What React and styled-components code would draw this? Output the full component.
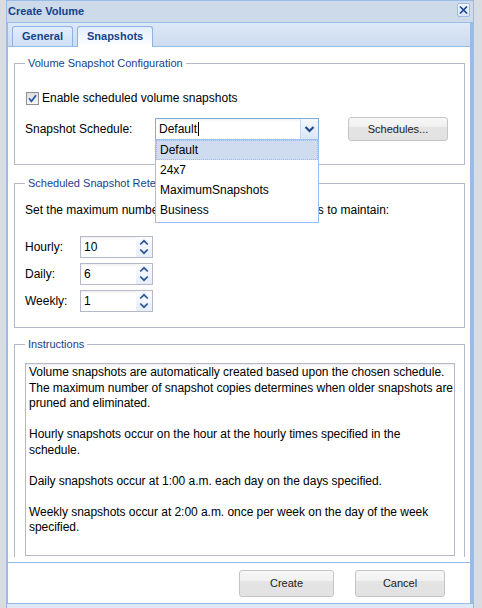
import React from 'react';
import styled, { createGlobalStyle } from 'styled-components';

const GlobalStyle = createGlobalStyle`
  html, body {
    margin: 0;
    padding: 0;
  }
  body {
    background: #d9dce1;
    font-family: "Liberation Sans", Arial, sans-serif;
    font-size: 12px;
    color: #000;
    overflow: hidden;
  }
`;

const Window = styled.div`
  box-sizing: border-box;
  width: 468px;
  height: 608px;
  margin-left: 6px;
  padding-bottom: 4px;
  border: 1px solid #99bbe8;
  border-bottom: none;
  background: #dfe8f6;
  display: flex;
  flex-direction: column;
`;

const TitleBar = styled.div`
  height: 21px;
  flex: none;
  display: flex;
  align-items: flex-start;
  padding: 0 3px 0 1px;
  background: #cddae9;
`;

const Title = styled.div`
  font-size: 11px;
  font-weight: bold;
  line-height: 20px;
  color: #15428b;
`;

const CloseButton = styled.div`
  margin: 2px 0 0 auto;
  width: 13px;
  height: 14px;
  box-sizing: border-box;
  border: 1px solid #9dbbe3;
  border-radius: 2px;
  background: linear-gradient(#f3f7fd, #d6e4f6);
  display: flex;
  align-items: center;
  justify-content: center;
`;

const Panel = styled.div`
  flex: 1;
  display: flex;
  flex-direction: column;
  border: 1px solid #99bbe8;
  border-right-width: 3px;
  background: #fff;
  min-height: 0;
`;

const TabStrip = styled.div`
  height: 23px;
  flex: none;
  display: flex;
  align-items: flex-end;
  gap: 4px;
  padding-left: 4px;
  border-bottom: 1px solid #99bbe8;
  background: linear-gradient(#dde8f6, #cddcf0);
`;

const Tab = styled.div`
  position: relative;
  box-sizing: border-box;
  height: ${p => (p.$active ? 21 : 20)}px;
  margin-bottom: ${p => (p.$active ? -1 : 0)}px;
  padding: 0 9px;
  border: 1px solid #8db2e3;
  border-bottom: none;
  border-radius: 3px 3px 0 0;
  background: ${p =>
    p.$active
      ? 'linear-gradient(#e2edfc, #f7faff 70%, #fff)'
      : 'linear-gradient(#e3edfb, #cfdff5)'};
  font-size: 11px;
  font-weight: bold;
  line-height: 19px;
  color: #15428b;
`;

const TabBody = styled.div`
  height: 515px;
  flex: none;
  background: #fff;
`;

const Scroll = styled.div`
  height: 510px;
  overflow: hidden;
  padding: 0 5px 0 6px;
`;

const Fieldset = styled.fieldset`
  margin: ${p => p.$mt}px 0 0;
  padding: ${p => p.$pt}px 9px ${p => p.$pb}px 10px;
  border: 1px solid #b5b8c8;
  min-width: 0;
`;

const Legend = styled.legend`
  padding: 0 3px;
  font-size: 11px;
  line-height: 14px;
  color: #15428b;
`;

const CheckRow = styled.label`
  display: flex;
  align-items: center;
  gap: 3px;
  height: 16px;
  padding-left: 1px;
`;

const FormRow = styled.div`
  display: flex;
  align-items: center;
  height: ${p => p.$h}px;
  margin-top: ${p => p.$mt}px;
`;

const FieldLabel = styled.div`
  width: ${p => p.$w}px;
  flex: none;
`;

const TextLine = styled.div`
  height: 16px;
  line-height: 16px;
  white-space: nowrap;
`;

const Combo = styled.div`
  position: relative;
  display: flex;
  width: 164px;
  height: 22px;
  box-sizing: border-box;
  border: 1px solid #7eadd9;
  background: #fff;
`;

const ComboText = styled.div`
  flex: 1;
  display: flex;
  align-items: center;
  padding-left: 3px;
  background: linear-gradient(#efefef, #fff 3px);
`;

const Caret = styled.span`
  width: 1px;
  height: 14px;
  background: #000;
  margin-left: 1px;
`;

const Trigger = styled.div`
  width: 17px;
  flex: none;
  display: flex;
  align-items: center;
  justify-content: center;
  border-left: 1px solid #c7d8ee;
  background: linear-gradient(#f4f8fe, #d9e6f7);
`;

const DropList = styled.div`
  position: absolute;
  top: 100%;
  left: -1px;
  width: 164px;
  box-sizing: border-box;
  padding-bottom: 2px;
  border: 1px solid #98c0f4;
  background: #fff;
  z-index: 5;
`;

const DropItem = styled.div`
  height: 20px;
  box-sizing: border-box;
  padding: 0 3px;
  line-height: 18px;
  border: 1px ${p => (p.$selected ? 'dotted #a3bae9' : 'solid transparent')};
  background: ${p => (p.$selected ? '#cfdcf0' : 'transparent')};
`;

const Button = styled.div`
  width: ${p => p.$w}px;
  height: ${p => p.$h}px;
  margin-left: ${p => p.$ml || 0}px;
  flex: none;
  box-sizing: border-box;
  border: 1px solid #c5c5c5;
  border-radius: 3px;
  background: linear-gradient(#f7f7f7, #f1f1f1 38%, #e4e4e4 42%, #e2e2e2);
  display: flex;
  align-items: center;
  justify-content: center;
  font-size: 11px;
  color: #222;
`;

const SpinGroup = styled.div`
  display: flex;
  flex-direction: column;
  gap: 5px;
  margin-top: 18px;
`;

const Spinner = styled.div`
  display: flex;
  width: 73px;
  height: 22px;
  box-sizing: border-box;
  border: 1px solid #b5b8c8;
  background: #fff;
`;

const SpinValue = styled.div`
  flex: 1;
  padding-left: 3px;
  line-height: 20px;
  background: linear-gradient(#efefef, #fff 3px);
`;

const SpinTrigger = styled.div`
  width: 16px;
  flex: none;
  display: flex;
  align-items: center;
  justify-content: center;
  background: linear-gradient(#fbfcfe, #e6eef9);
`;

const InfoBox = styled.div`
  height: 193px;
  box-sizing: border-box;
  margin-top: 12px;
  padding: 1px 3px;
  border: 1px solid #b5b8c8;
  background: linear-gradient(#ececec, #fff 3px);
  line-height: 15.5px;
  letter-spacing: -0.04px;
  white-space: pre;
  overflow: hidden;
`;

const Footer = styled.div`
  height: 40px;
  flex: none;
  display: flex;
  align-items: center;
  justify-content: flex-end;
  gap: 21px;
  padding-right: 25px;
  border-top: 1px solid #99bbe8;
  background: #fff;
`;

const CloseIcon = () => (
  <svg width="9" height="10" viewBox="0 0 9 10">
    <path d="M1 1.5 L8 8.5 M8 1.5 L1 8.5" stroke="#15428b" strokeWidth="1.6" fill="none" />
  </svg>
);

const CheckIcon = () => (
  <svg width="13" height="13" viewBox="0 0 13 13">
    <defs>
      <linearGradient id="cb" x1="0" y1="0" x2="0" y2="1">
        <stop offset="0" stopColor="#dcdcdc" />
        <stop offset="1" stopColor="#fafafa" />
      </linearGradient>
    </defs>
    <rect x="0.5" y="0.5" width="12" height="12" fill="url(#cb)" stroke="#8f9092" />
    <path d="M3 6.3 L5.4 9.3 L10 3.2" stroke="#2c56a8" strokeWidth="1.8" fill="none" />
  </svg>
);

const ComboArrow = () => (
  <svg width="11" height="8" viewBox="0 0 11 8">
    <path d="M1.5 2 L5.5 6 L9.5 2" stroke="#1f4a8c" strokeWidth="2.2" fill="none" />
  </svg>
);

const SpinArrows = () => (
  <svg width="12" height="20" viewBox="0 0 12 20">
    <path d="M2.2 7.5 L6 3.8 L9.8 7.5" stroke="#2a5597" strokeWidth="1.7" fill="none" />
    <path d="M2.2 12.5 L6 16.2 L9.8 12.5" stroke="#2a5597" strokeWidth="1.7" fill="none" />
  </svg>
);

const schedules = ['Default', '24x7', 'MaximumSnapshots', 'Business'];

const retention = [
  { label: 'Hourly:', value: '10' },
  { label: 'Daily:', value: '6' },
  { label: 'Weekly:', value: '1' },
];

const instructions = [
  'Volume snapshots are automatically created based upon the chosen schedule.',
  'The maximum number of snapshot copies determines when older snapshots are',
  'pruned and eliminated.',
  '',
  'Hourly snapshots occur on the hour at the hourly times specified in the',
  'schedule.',
  '',
  'Daily snapshots occur at 1:00 a.m. each day on the days specified.',
  '',
  'Weekly snapshots occur at 2:00 a.m. once per week on the day of the week',
  'specified.',
].join('\n');

export default function App() {
  return (
    <>
      <GlobalStyle />
      <Window>
        <TitleBar>
          <Title>Create Volume</Title>
          <CloseButton>
            <CloseIcon />
          </CloseButton>
        </TitleBar>
        <Panel>
          <TabStrip>
            <Tab>General</Tab>
            <Tab $active>Snapshots</Tab>
          </TabStrip>
          <TabBody>
            <Scroll>
              <Fieldset $mt={9} $pt={20} $pb={23}>
                <Legend>Volume Snapshot Configuration</Legend>
                <CheckRow>
                  <CheckIcon />
                  Enable scheduled volume snapshots
                </CheckRow>
                <FormRow $h={24} $mt={11}>
                  <FieldLabel $w={130}>Snapshot Schedule:</FieldLabel>
                  <Combo>
                    <ComboText>
                      Default
                      <Caret />
                    </ComboText>
                    <Trigger>
                      <ComboArrow />
                    </Trigger>
                    <DropList>
                      {schedules.map((s, i) => (
                        <DropItem key={s} $selected={i === 0}>
                          {s}
                        </DropItem>
                      ))}
                    </DropList>
                  </Combo>
                  <Button $w={100} $h={24} $ml={29}>
                    Schedules...
                  </Button>
                </FormRow>
              </Fieldset>

              <Fieldset $mt={11} $pt={12} $pb={15}>
                <Legend>Scheduled Snapshot Retention</Legend>
                <TextLine>Set the maximum number of scheduled snapshot copies to maintain:</TextLine>
                <SpinGroup>
                  {retention.map(r => (
                    <FormRow key={r.label} $h={22} $mt={0}>
                      <FieldLabel $w={55}>{r.label}</FieldLabel>
                      <Spinner>
                        <SpinValue>{r.value}</SpinValue>
                        <SpinTrigger>
                          <SpinArrows />
                        </SpinTrigger>
                      </Spinner>
                    </FormRow>
                  ))}
                </SpinGroup>
              </Fieldset>

              <Fieldset $mt={9} $pt={0} $pb={10}>
                <Legend>Instructions</Legend>
                <InfoBox>{instructions}</InfoBox>
              </Fieldset>
            </Scroll>
          </TabBody>
          <Footer>
            <Button $w={95} $h={27}>Create</Button>
            <Button $w={90} $h={27}>Cancel</Button>
          </Footer>
        </Panel>
      </Window>
    </>
  );
}
